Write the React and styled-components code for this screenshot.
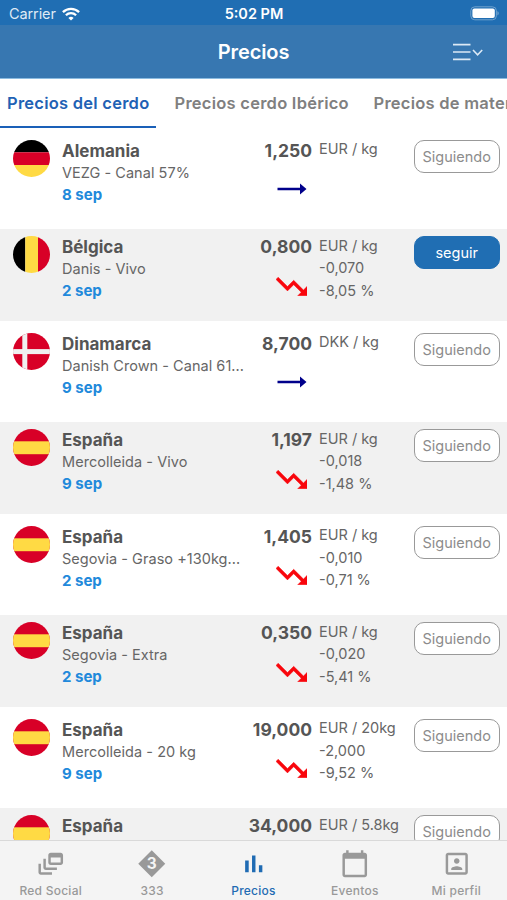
import styled, { createGlobalStyle, css } from "styled-components";

const GlobalStyle = createGlobalStyle`
  * {
    box-sizing: border-box;
  }
  body {
    margin: 0;
    font-family: Inter, "Liberation Sans", sans-serif;
    background: #fff;
  }
`;

const Screen = styled.div`
  display: flex;
  flex-direction: column;
  width: 507px;
  height: 900px;
  overflow: hidden;
  background: #fff;
  color: #555;
`;

const StatusBar = styled.div`
  display: grid;
  grid-template-columns: 1fr auto 1fr;
  align-items: center;
  height: 25px;
  flex-shrink: 0;
  padding: 3px 8px 0 9px;
  background: #206eb3;
  color: #fff;
`;

const Carrier = styled.div`
  display: flex;
  align-items: center;
  gap: 6px;
  font-size: 14.5px;
  line-height: 18px;
  letter-spacing: -0.1px;
  color: #dfeaf5;
`;

const Clock = styled.div`
  font-size: 14.5px;
  line-height: 18px;
  font-weight: 600;
`;

const Battery = styled.svg`
  justify-self: end;
  margin-top: -2px;
`;

const Header = styled.header`
  display: grid;
  grid-template-columns: 1fr auto 1fr;
  align-items: center;
  height: 54px;
  flex-shrink: 0;
  padding: 1px 24px 0;
  border-bottom: 1px solid #8bbbe0;
  background: #3777b1;
  color: #fff;
`;

const Title = styled.h1`
  grid-column: 2;
  margin: 0;
  font-size: 20px;
  font-weight: 600;
  line-height: 24px;
  letter-spacing: -0.1px;
`;

const MenuButton = styled.button`
  justify-self: end;
  display: flex;
  border: none;
  background: none;
  padding: 0;
  cursor: pointer;
`;

const Tabs = styled.nav`
  display: flex;
  height: 49px;
  flex-shrink: 0;
`;

const Tab = styled.button`
  flex-shrink: 0;
  width: ${(props) => props.$width}px;
  height: 49px;
  border: none;
  border-bottom: 2.5px solid ${(props) => (props.$active ? "#1a60b8" : "transparent")};
  background: none;
  padding: 1px 0 0 ${(props) => props.$indent}px;
  font-family: inherit;
  font-size: 16.5px;
  font-weight: 600;
  letter-spacing: 0.25px;
  text-align: left;
  white-space: nowrap;
  color: ${(props) => (props.$active ? "#1f62b5" : "#808080")};
`;

const List = styled.main`
  flex: 1;
  min-height: 0;
  padding-top: 4.75px;
  overflow: hidden;
`;

const Row = styled.div`
  display: grid;
  grid-template-columns: 49px 184px 66px 102px 85.5px;
  align-items: start;
  height: 92px;
  margin-bottom: 4.5px;
  padding: 7.1px 0 0 13px;
  background: ${(props) => (props.$shaded ? "#f1f1f1" : "#fff")};
`;

const Name = styled.div`
  font-size: 17px;
  font-weight: 700;
  line-height: 22px;
`;

const Market = styled.div`
  overflow: hidden;
  font-size: 14.5px;
  line-height: 21px;
  letter-spacing: 0.04px;
  white-space: nowrap;
  color: #666;
`;

const Day = styled.div`
  font-size: 15px;
  font-weight: 700;
  line-height: 24px;
  color: #2189db;
`;

const PriceColumn = styled.div`
  display: flex;
  flex-direction: column;
  align-items: flex-end;
`;

const Price = styled.div`
  font-size: 17.5px;
  font-weight: 700;
  line-height: 22px;
  white-space: nowrap;
`;

const TrendSlot = styled.div`
  display: flex;
  align-items: center;
  height: 20px;
  margin: ${(props) => (props.$flat ? "17px 5.5px 0 0" : "18px 5.5px 0 0")};
`;

const Variation = styled.div`
  padding-left: 7px;
  font-size: 14.5px;
  line-height: 22.3px;
  margin-top: -1.4px;
  white-space: nowrap;
  color: #666;
`;

const FollowButton = styled.button`
  height: 33px;
  border: 1.5px solid #999;
  border-radius: 10px;
  background: #fff;
  padding: 0;
  font-family: inherit;
  font-size: 14.5px;
  color: #8c8c8c;
  ${(props) =>
    props.$primary &&
    css`
      border-color: #206eb3;
      background: #206eb3;
      color: #fff;
    `}
`;

const BottomBar = styled.nav`
  display: grid;
  grid-template-columns: repeat(5, 1fr);
  height: 60px;
  flex-shrink: 0;
  border-top: 1px solid #d9d9d9;
  background: #f4f4f4;
`;

const BottomItem = styled.button`
  display: flex;
  flex-direction: column;
  align-items: center;
  border: none;
  background: none;
  padding: 8px 0 0;
  font-family: inherit;
  font-size: 12px;
  font-weight: 500;
  line-height: 16px;
  letter-spacing: 0.25px;
  gap: 4px;
  color: ${(props) => (props.$active ? "#1f6bb3" : "#999")};
`;

const FLAGS = {
  de: (
    <>
      <rect width="37" height="12.3" fill="#000" />
      <rect y="12.3" width="37" height="12.7" fill="#d80027" />
      <rect y="25" width="37" height="12" fill="#ffda44" />
    </>
  ),
  be: (
    <>
      <rect width="12.3" height="37" fill="#000" />
      <rect x="12.3" width="12.7" height="37" fill="#ffda44" />
      <rect x="25" width="12" height="37" fill="#d80027" />
    </>
  ),
  dk: (
    <>
      <rect width="37" height="37" fill="#d80027" />
      <rect x="9.3" width="5" height="37" fill="#f0f0f0" />
      <rect y="16.1" width="37" height="5" fill="#f0f0f0" />
    </>
  ),
  es: (
    <>
      <rect width="37" height="37" fill="#d80027" />
      <rect y="12.3" width="37" height="12.9" fill="#ffda44" />
    </>
  ),
};

const Flag = ({ country }) => (
  <svg width="37" height="37" viewBox="0 0 37 37">
    <clipPath id={`round-${country}`}>
      <circle cx="18.5" cy="18.5" r="18.5" />
    </clipPath>
    <g clipPath={`url(#round-${country})`}>{FLAGS[country]}</g>
  </svg>
);

const Trend = ({ flat }) =>
  flat ? (
    <svg width="30" height="12" viewBox="0 0 30 12" fill="#00008b">
      <path d="M.5 4.7H23V.4L29.5 6 23 11.6V7.3H.5z" />
    </svg>
  ) : (
    <svg width="31" height="19" viewBox="2 6 20 12" fill="#f9060c" stroke="#f9060c" strokeWidth=".3">
      <path d="M16 18l2.29-2.29-4.88-4.88-4 4L2 7.41 3.41 6l6 6 4-4 6.3 6.29L22 12v6z" />
    </svg>
  );

const WifiIcon = () => (
  <svg width="18" height="14" viewBox="0 0 18 14" fill="none" stroke="#fff" strokeWidth="2.3">
    <path d="M.9 5.1a11.6 11.6 0 0 1 16.2 0" />
    <path d="M3.9 8.2a7.3 7.3 0 0 1 10.2 0" />
    <path d="M9 13.6l-2.6-2.7a3.8 3.8 0 0 1 5.2 0z" fill="#fff" stroke="none" />
  </svg>
);

const BatteryIcon = () => (
  <Battery width="29" height="15" viewBox="0 0 29 15">
    <rect x=".8" y=".8" width="25.6" height="13" rx="4" fill="none" stroke="#6fa1cd" />
    <rect x="2.4" y="2.5" width="22.4" height="9.6" rx="2" fill="#fff" />
    <path d="M27.4 5.2c1.8.6 1.8 3.6 0 4.2z" fill="#6fa1cd" />
  </Battery>
);

const MenuIcon = () => (
  <svg width="30" height="18" viewBox="0 0 30 18" fill="none" stroke="#dce9f5" strokeWidth="1.6">
    <path d="M0 1.6h17.5M0 9h17.5M0 16.4h17.5" />
    <path d="M20 7l4.6 4.8L29.2 7" />
  </svg>
);

const NAV_ICONS = {
  social: (
    <path d="M8 8H6v7c0 1.1.9 2 2 2h9v-2H8V8zM20 3h-8c-1.1 0-2 .9-2 2v6c0 1.1.9 2 2 2h8c1.1 0 2-.9 2-2V5c0-1.1-.9-2-2-2zm0 8h-8V7h8v4zM4 12H2v7c0 1.1.9 2 2 2h9v-2H4v-7z" />
  ),
  "333": (
    <>
      <path d="M12 1L23 12 12 23 1 12z" />
      <text x="12.1" y="16.5" textAnchor="middle" fontSize="12.5" fontWeight="700" fill="#f4f4f4">
        3
      </text>
    </>
  ),
  prices: <path d="M5 9.4h2.9V19H5zM10.6 5.2h2.8V19h-2.8zm5.6 8H19V19h-2.8z" />,
  events: (
    <path d="M20 3h-1V1h-2v2H7V1H5v2H4c-1.1 0-2 .9-2 2v16c0 1.1.9 2 2 2h16c1.1 0 2-.9 2-2V5c0-1.1-.9-2-2-2zm0 18H4V8h16v13z" />
  ),
  profile: (
    <path d="M19 3H5c-1.1 0-2 .9-2 2v14c0 1.1.9 2 2 2h14c1.1 0 2-.9 2-2V5c0-1.1-.9-2-2-2zm0 16H5V5h14v14zM12 12c1.24 0 2.25-1.01 2.25-2.25S13.24 7.5 12 7.5 9.75 8.51 9.75 9.75 10.76 12 12 12zm4.5 4.25c0-1.5-3-2.25-4.5-2.25s-4.5.75-4.5 2.25V17h9v-.75z" />
  ),
};

const NavIcon = ({ name }) => (
  <svg width="29.5" height="29.5" viewBox="0 0 24 24" fill="currentColor">
    {NAV_ICONS[name]}
  </svg>
);

// the last tab runs past the right edge of the screen
const tabs = [
  { label: "Precios del cerdo", width: 156, indent: 7, active: true },
  { label: "Precios cerdo Ibérico", width: 211, indent: 18.5 },
  { label: "Precios de materias primas", width: 260, indent: 6.5 },
];

const prices = [
  { country: "de", name: "Alemania", market: "VEZG - Canal 57%", day: "8 sep", price: "1,250", unit: "EUR / kg" },
  { country: "be", name: "Bélgica", market: "Danis - Vivo", day: "2 sep", price: "0,800", unit: "EUR / kg", diff: "-0,070", percent: "-8,05 %", follow: true },
  { country: "dk", name: "Dinamarca", market: "Danish Crown - Canal 61...", day: "9 sep", price: "8,700", unit: "DKK / kg" },
  { country: "es", name: "España", market: "Mercolleida - Vivo", day: "9 sep", price: "1,197", unit: "EUR / kg", diff: "-0,018", percent: "-1,48 %" },
  { country: "es", name: "España", market: "Segovia - Graso +130kg...", day: "2 sep", price: "1,405", unit: "EUR / kg", diff: "-0,010", percent: "-0,71 %" },
  { country: "es", name: "España", market: "Segovia - Extra", day: "2 sep", price: "0,350", unit: "EUR / kg", diff: "-0,020", percent: "-5,41 %" },
  { country: "es", name: "España", market: "Mercolleida - 20 kg", day: "9 sep", price: "19,000", unit: "EUR / 20kg", diff: "-2,000", percent: "-9,52 %" },
  { country: "es", name: "España", price: "34,000", unit: "EUR / 5.8kg" },
];

const navItems = [
  { icon: "social", label: "Red Social" },
  { icon: "333", label: "333" },
  { icon: "prices", label: "Precios", active: true },
  { icon: "events", label: "Eventos" },
  { icon: "profile", label: "Mi perfil" },
];

const PriceRow = ({ item, shaded }) => (
  <Row $shaded={shaded}>
    <Flag country={item.country} />
    <div>
      <Name>{item.name}</Name>
      <Market>{item.market}</Market>
      <Day>{item.day}</Day>
    </div>
    <PriceColumn>
      <Price>{item.price}</Price>
      {item.day && (
        <TrendSlot $flat={!item.diff}>
          <Trend flat={!item.diff} />
        </TrendSlot>
      )}
    </PriceColumn>
    <Variation>
      <div>{item.unit}</div>
      <div>{item.diff}</div>
      <div>{item.percent}</div>
    </Variation>
    <FollowButton $primary={item.follow}>{item.follow ? "seguir" : "Siguiendo"}</FollowButton>
  </Row>
);

export default function App() {
  return (
    <Screen>
      <GlobalStyle />
      <StatusBar>
        <Carrier>
          Carrier
          <WifiIcon />
        </Carrier>
        <Clock>5:02 PM</Clock>
        <BatteryIcon />
      </StatusBar>
      <Header>
        <Title>Precios</Title>
        <MenuButton>
          <MenuIcon />
        </MenuButton>
      </Header>
      <Tabs>
        {tabs.map((tab) => (
          <Tab key={tab.label} $width={tab.width} $indent={tab.indent} $active={tab.active}>
            {tab.label}
          </Tab>
        ))}
      </Tabs>
      <List>
        {prices.map((item, index) => (
          <PriceRow key={index} item={item} shaded={index % 2 === 1} />
        ))}
      </List>
      <BottomBar>
        {navItems.map((item) => (
          <BottomItem key={item.label} $active={item.active}>
            <NavIcon name={item.icon} />
            {item.label}
          </BottomItem>
        ))}
      </BottomBar>
    </Screen>
  );
}
